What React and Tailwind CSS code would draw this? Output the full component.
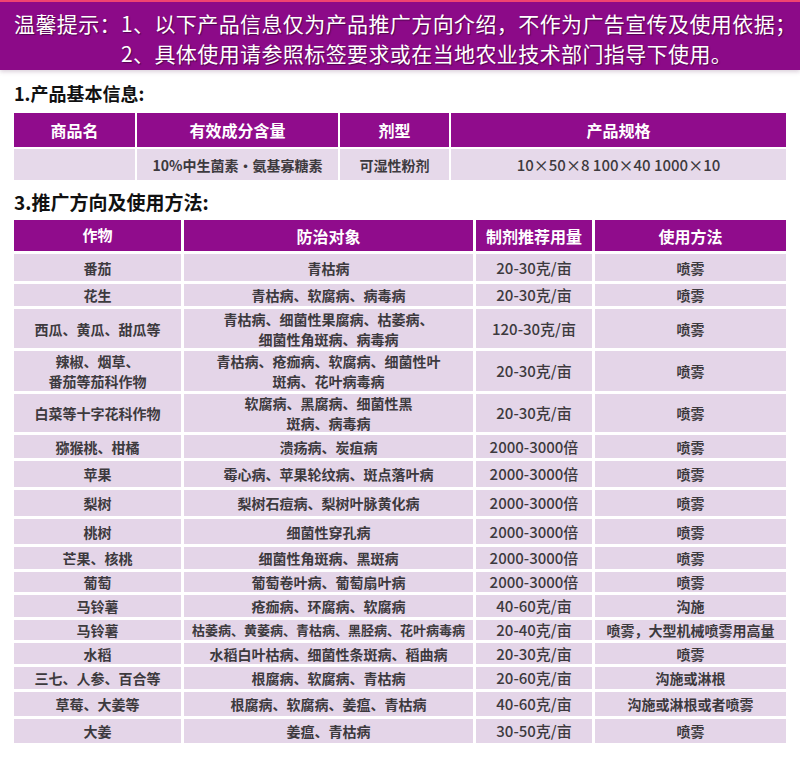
const basicHead = ["商品名", "有效成分含量", "剂型", "产品规格"];

const usageRows = [
  { h: "h-[27px]", crop: ["番茄"], target: ["青枯病"], dose: "20-30克/亩", way: "喷雾" },
  { h: "h-[22px]", crop: ["花生"], target: ["青枯病、软腐病、病毒病"], dose: "20-30克/亩", way: "喷雾" },
  { h: "h-[39px]", crop: ["西瓜、黄瓜、甜瓜等"], target: ["青枯病、细菌性果腐病、枯萎病、", "细菌性角斑病、病毒病"], dose: "120-30克/亩", way: "喷雾" },
  { h: "h-[40px]", crop: ["辣椒、烟草、", "番茄等茄科作物"], target: ["青枯病、疮痂病、软腐病、细菌性叶", "斑病、花叶病毒病"], dose: "20-30克/亩", way: "喷雾" },
  { h: "h-[38px]", crop: ["白菜等十字花科作物"], target: ["软腐病、黑腐病、细菌性黑", "斑病、病毒病"], dose: "20-30克/亩", way: "喷雾" },
  { h: "h-[23px]", crop: ["猕猴桃、柑橘"], target: ["溃疡病、炭疽病"], dose: "2000-3000倍", way: "喷雾" },
  { h: "h-[26px]", crop: ["苹果"], target: ["霉心病、苹果轮纹病、斑点落叶病"], dose: "2000-3000倍", way: "喷雾" },
  { h: "h-[26px]", crop: ["梨树"], target: ["梨树石痘病、梨树叶脉黄化病"], dose: "2000-3000倍", way: "喷雾" },
  { h: "h-[25px]", crop: ["桃树"], target: ["细菌性穿孔病"], dose: "2000-3000倍", way: "喷雾" },
  { h: "h-[22px]", crop: ["芒果、核桃"], target: ["细菌性角斑病、黑斑病"], dose: "2000-3000倍", way: "喷雾" },
  { h: "h-[20px]", crop: ["葡萄"], target: ["葡萄卷叶病、葡萄扇叶病"], dose: "2000-3000倍", way: "喷雾" },
  { h: "h-[22px]", crop: ["马铃薯"], target: ["疮痂病、环腐病、软腐病"], dose: "40-60克/亩", way: "沟施" },
  { h: "h-[20px]", crop: ["马铃薯"], target: ["枯萎病、黄萎病、青枯病、黑胫病、花叶病毒病"], dose: "20-40克/亩", way: "喷雾，大型机械喷雾用高量", small: true },
  { h: "h-[21px]", crop: ["水稻"], target: ["水稻白叶枯病、细菌性条斑病、稻曲病"], dose: "20-30克/亩", way: "喷雾" },
  { h: "h-[22px]", crop: ["三七、人参、百合等"], target: ["根腐病、软腐病、青枯病"], dose: "20-60克/亩", way: "沟施或淋根" },
  { h: "h-[24px]", crop: ["草莓、大姜等"], target: ["根腐病、软腐病、姜瘟、青枯病"], dose: "40-60克/亩", way: "沟施或淋根或者喷雾" },
  { h: "h-[24px]", crop: ["大姜"], target: ["姜瘟、青枯病"], dose: "30-50克/亩", way: "喷雾" },
];

const cell = "flex flex-col items-center justify-center bg-[#e4d5e8] text-[#3d3a3e] font-bold leading-[20px] whitespace-nowrap";
const head = "flex items-center justify-center bg-[#900c8c] text-white font-bold";

export default function App() {
  return (
    <main className="w-[800px] h-[762px] bg-white overflow-hidden font-['Noto_Sans_CJK_SC','Noto_Sans',sans-serif]">

      {/* NOTICE BANNER */}
      <section className="border-t-2 border-[#ef4470] bg-[#8c0a88] pt-[6px] pb-[2px] pl-[14px] flex whitespace-nowrap text-white text-[21px] leading-[30px] tracking-[0.4px] [text-shadow:1px_1px_1px_rgba(40,0,40,0.6)] shadow-[0_2px_4px_rgba(120,80,120,0.25)]">
        <span className="shrink-0">温馨提示：</span>
        <div className="shrink-0">
          <p>1、以下产品信息仅为产品推广方向介绍，不作为广告宣传及使用依据；</p>
          <p>2、具体使用请参照标签要求或在当地农业技术部门指导下使用。</p>
        </div>
      </section>

      <div className="px-[14px]">
        {/* BASIC INFO */}
        <h2 className="mt-[11px] text-[18px] leading-[24px] font-bold text-[#111]">1.产品基本信息:</h2>
        <div className="mt-[8px] grid grid-cols-[121px_201px_109px_335px] gap-[2px] w-[772px]">
          {basicHead.map((t) => (
            <div key={t} className={`${head} h-[34px] text-[16px]`}>{t}</div>
          ))}
          <div className={`${cell} h-[31px] bg-[#e6d9ea]`} />
          <div className={`${cell} h-[31px] bg-[#e6d9ea] text-[14px]`}>10%中生菌素・氨基寡糖素</div>
          <div className={`${cell} h-[31px] bg-[#e6d9ea] text-[14px]`}>可湿性粉剂</div>
          <div className={`${cell} h-[31px] bg-[#e6d9ea] text-[15px] font-medium`}>10×50×8 100×40 1000×10</div>
        </div>

        {/* USAGE */}
        <h2 className="mt-[10px] text-[19px] leading-[24px] font-bold text-[#111]">3.推广方向及使用方法:</h2>
        <div className="mt-[6px] grid grid-cols-[167px_289px_116px_191px] gap-x-[3px] gap-y-[3px] w-[772px]">
          <div className={`${head} h-[31px] text-[15px]`}>作物</div>
          <div className={`${head} h-[31px] text-[16px]`}>防治对象</div>
          <div className={`${head} h-[31px] text-[16px]`}>制剂推荐用量</div>
          <div className={`${head} h-[31px] text-[16px]`}>使用方法</div>

          {usageRows.map((r, i) => (
            <UsageRow key={i} row={r} />
          ))}
        </div>
      </div>
    </main>
  );
}

function UsageRow({ row }) {
  return (
    <>
      <div className={`${cell} ${row.h} text-[14px]`}>
        {row.crop.map((l) => <span key={l}>{l}</span>)}
      </div>
      <div className={`${cell} ${row.h} ${row.small ? "text-[13px]" : "text-[14px]"}`}>
        {row.target.map((l) => <span key={l}>{l}</span>)}
      </div>
      <div className={`${cell} ${row.h} text-[15px] font-medium`}>{row.dose}</div>
      <div className={`${cell} ${row.h} text-[14px]`}>{row.way}</div>
    </>
  );
}
